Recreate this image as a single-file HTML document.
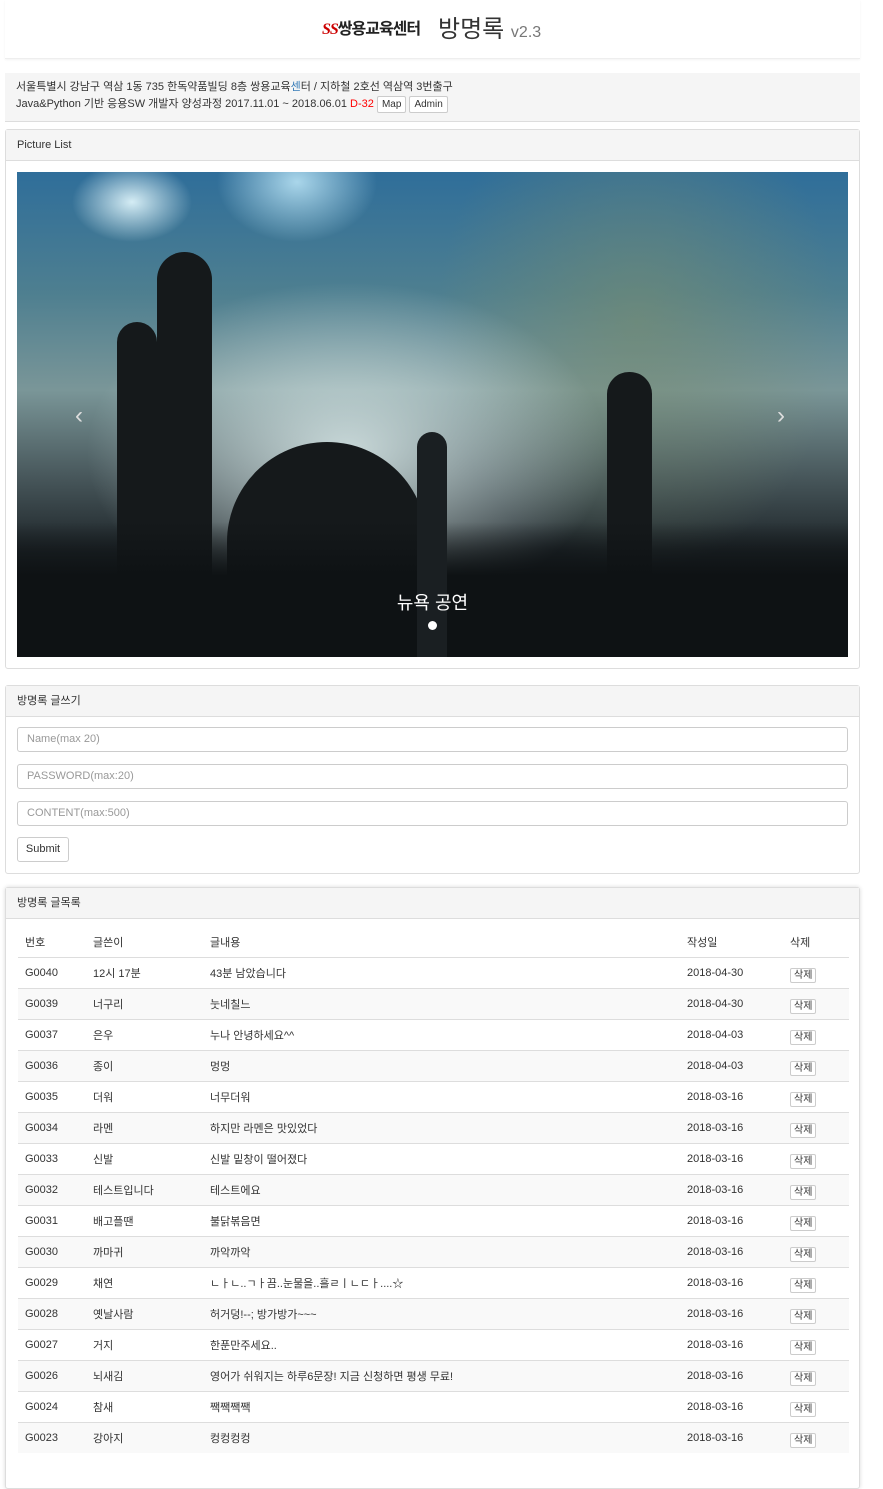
<!DOCTYPE html>
<html><head><meta charset="utf-8"><style>
body{margin:0;background:#fff;font-family:"Liberation Sans","Noto Sans CJK KR",sans-serif;font-size:11px;color:#333;width:883px;height:1451px;overflow:hidden;position:relative}
.abs{position:absolute}
.hdr{left:5px;top:0;width:855px;height:58px;border-bottom:1px solid #eee;box-shadow:0 1px 2px rgba(0,0,0,.05)}
.info{left:5px;top:73px;width:855px;height:48px;background:#f5f5f5;border-bottom:1px solid #ddd}
.panel{left:5px;width:853px;border:1px solid #ddd;border-radius:3px;background:#fff}
.ph{height:30px;background:#f5f5f5;border-bottom:1px solid #ddd;line-height:30px;padding-left:11px;font-size:11px}
.btn{display:inline-block;border:1px solid #ccc;border-radius:2px;background:#fff;font-size:10px;padding:1px 4px;line-height:13px}
.inp{position:absolute;left:11px;height:25px;border:1px solid #ccc;border-radius:3px;line-height:23px;padding-left:9px;box-sizing:border-box;color:#999;font-size:11px;width:831px}
table{border-collapse:collapse;position:absolute;left:12px;top:38px;width:831px;font-size:11px}
td,th{text-align:left;padding:0 7px;height:30px;border-top:1px solid #ddd}
th{font-weight:normal;border-top:none;height:31px;border-bottom:1px solid #ddd}
tr:nth-child(odd) td{background:#f9f9f9}
.x{border:1px solid #ccc;border-radius:2px;padding:1px 3px;font-size:10px;background:#fff}
.s{position:absolute;background:#15191b}
</style></head><body>
<div class="abs hdr"></div>
<div class="abs" style="left:322px;top:15px;font-size:16px;font-weight:bold;letter-spacing:-1px;color:#222"><span style="color:#c00;font-style:italic;font-family:'Liberation Serif'">SS</span>쌍용교육센터</div>
<div class="abs" style="left:438px;top:9px;font-size:24px;color:#333">방명록 <span style="font-size:16px;color:#777">v2.3</span></div>
<div class="abs info"><div style="padding:6px 0 0 11px;line-height:17px">서울특별시 강남구 역삼 1동 735 한독약품빌딩 8층 쌍용교육<span style="color:#337ab7">센</span>터 / 지하철 2호선 역삼역 3번출구<br>Java&amp;Python 기반 응용SW 개발자 양성과정 2017.11.01 ~ 2018.06.01 <span style="color:red">D-32</span> <span class="btn">Map</span> <span class="btn">Admin</span></div></div>
<div class="abs panel" style="top:129px;height:538px"><div class="ph">Picture List</div>
<div class="abs" style="left:11px;top:42px;width:831px;height:485px;overflow:hidden;background:radial-gradient(ellipse 60px 40px at 115px 30px,rgba(230,250,255,.9),transparent),radial-gradient(ellipse 80px 60px at 280px 10px,rgba(200,240,255,.8),transparent),radial-gradient(ellipse 260px 170px at 330px 280px,rgba(220,235,235,.85),transparent),radial-gradient(ellipse 200px 250px at 620px 150px,rgba(120,140,110,.6),transparent),linear-gradient(180deg,#2f6e9a 0%,#4e7f90 25%,#7a9698 45%,#4a5a5e 62%,#1e2529 78%,#0e1214 100%)">
<div class="s" style="left:140px;top:80px;width:55px;height:405px;border-radius:28px 28px 0 0"></div>
<div class="s" style="left:100px;top:150px;width:40px;height:335px;border-radius:20px 20px 0 0"></div>
<div class="s" style="left:590px;top:200px;width:45px;height:285px;border-radius:22px 22px 0 0"></div>
<div class="s" style="left:210px;top:270px;width:200px;height:215px;border-radius:100px 100px 0 0"></div>
<div class="s" style="left:0;top:350px;width:831px;height:135px;background:linear-gradient(180deg,rgba(14,18,20,0),#0e1214 40%)"></div>
<div class="s" style="left:400px;top:260px;width:30px;height:225px;border-radius:15px 15px 0 0;background:#1a1f22"></div>
<div class="abs" style="left:0;width:831px;text-align:center;color:#fff;font-size:18px;top:417px">뉴욕 공연</div>
<div class="abs" style="left:411px;top:449px;width:9px;height:9px;border-radius:50%;background:#fff"></div>
<div class="abs" style="left:58px;top:230px;color:#ddd;font-size:24px">‹</div>
<div class="abs" style="left:760px;top:230px;color:#ddd;font-size:24px">›</div>
</div></div>
<div class="abs panel" style="top:685px;height:187px"><div class="ph">방명록 글쓰기</div>
<div class="inp" style="top:41px">Name(max 20)</div>
<div class="inp" style="top:78px">PASSWORD(max:20)</div>
<div class="inp" style="top:115px">CONTENT(max:500)</div>
<div class="abs" style="left:11px;top:151px;width:50px;height:23px;border:1px solid #ccc;border-radius:3px;text-align:center;line-height:23px">Submit</div>
</div>
<div class="abs panel" style="top:887px;height:600px;box-shadow:0 0 4px rgba(0,0,0,.15)"><div class="ph">방명록 글목록</div>
<table>
<tr><th style="width:54px">번호</th><th style="width:103px">글쓴이</th><th>글내용</th><th style="width:89px">작성일</th><th style="width:52px">삭제</th></tr>
<tr><td>G0040</td><td>12시 17분</td><td>43분 남았습니다</td><td>2018-04-30</td><td><span class="x">삭제</span></td></tr>
<tr><td>G0039</td><td>너구리</td><td>눗네칠느</td><td>2018-04-30</td><td><span class="x">삭제</span></td></tr>
<tr><td>G0037</td><td>은우</td><td>누나 안녕하세요^^</td><td>2018-04-03</td><td><span class="x">삭제</span></td></tr>
<tr><td>G0036</td><td>종이</td><td>멍멍</td><td>2018-04-03</td><td><span class="x">삭제</span></td></tr>
<tr><td>G0035</td><td>더워</td><td>너무더워</td><td>2018-03-16</td><td><span class="x">삭제</span></td></tr>
<tr><td>G0034</td><td>라멘</td><td>하지만 라멘은 맛있었다</td><td>2018-03-16</td><td><span class="x">삭제</span></td></tr>
<tr><td>G0033</td><td>신발</td><td>신발 밑창이 떨어졌다</td><td>2018-03-16</td><td><span class="x">삭제</span></td></tr>
<tr><td>G0032</td><td>테스트입니다</td><td>테스트에요</td><td>2018-03-16</td><td><span class="x">삭제</span></td></tr>
<tr><td>G0031</td><td>배고플땐</td><td>불닭볶음면</td><td>2018-03-16</td><td><span class="x">삭제</span></td></tr>
<tr><td>G0030</td><td>까마귀</td><td>까악까악</td><td>2018-03-16</td><td><span class="x">삭제</span></td></tr>
<tr><td>G0029</td><td>채연</td><td>ㄴㅏㄴ..ㄱㅏ끔..눈물을..흘ㄹㅣㄴㄷㅏ....☆</td><td>2018-03-16</td><td><span class="x">삭제</span></td></tr>
<tr><td>G0028</td><td>옛날사람</td><td>허거덩!--; 방가방가~~~</td><td>2018-03-16</td><td><span class="x">삭제</span></td></tr>
<tr><td>G0027</td><td>거지</td><td>한푼만주세요..</td><td>2018-03-16</td><td><span class="x">삭제</span></td></tr>
<tr><td>G0026</td><td>뇌새김</td><td>영어가 쉬워지는 하루6문장! 지금 신청하면 평생 무료!</td><td>2018-03-16</td><td><span class="x">삭제</span></td></tr>
<tr><td>G0024</td><td>참새</td><td>짹짹짹짹</td><td>2018-03-16</td><td><span class="x">삭제</span></td></tr>
<tr><td>G0023</td><td>강아지</td><td>컹컹컹컹</td><td>2018-03-16</td><td><span class="x">삭제</span></td></tr>
</table></div>
</body></html>
